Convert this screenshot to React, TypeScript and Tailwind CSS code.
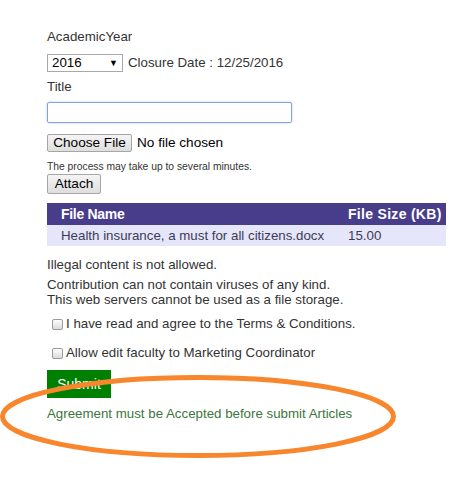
import React from "react";

const GreyButton = ({ label, className }: { label: string; className: string }) => (
   <span
      className={
         "flex items-center justify-center rounded-[2px] border border-[#a6a6a6] bg-gradient-to-b from-[#f4f4f4] to-[#dedede] text-[13.6px] text-black " +
         className
      }
   >
      {label}
   </span>
);

const Checkbox = () => (
   <span className="h-[11px] w-[11px] shrink-0 rounded-[2px] border border-[#9a9a9a] bg-gradient-to-b from-[#fdfdfd] to-[#dcdcdc]" />
);

const App = () => {
   return (
      <div className="relative h-[487px] w-[476px] overflow-hidden bg-white font-['Liberation_Sans',Arial,sans-serif] text-[13.3px] leading-[18px] text-[#333]">
         <div className="flex flex-col pl-[47px] pt-[27px]">
            <p className="leading-[20px]">AcademicYear</p>

            <div className="mt-[7px] flex h-[18px] items-center">
               <span className="flex h-[18px] w-[76px] items-center justify-between border border-[#a9a9a9] pl-[4px] pr-[4px] text-black">
                  <span>2016</span>
                  <span className="text-[9px]">▼</span>
               </span>
               <span className="ml-[5px]">Closure Date : 12/25/2016</span>
            </div>

            <p className="mt-[5px] leading-[20px]">Title</p>
            <span className="mt-[5px] h-[21px] w-[245px] rounded-[2px] border border-[#86a4dc] shadow-[0_0_2px_#a9c1ee]" />

            <div className="mt-[11px] flex h-[18px] items-center">
               <GreyButton label="Choose File" className="h-[18px] w-[85px]" />
               <span className="ml-[5px] text-[13.6px] text-black">No file chosen</span>
            </div>

            <p className="mt-[9px] text-[10.3px] leading-[12px]">The process may take up to several minutes.</p>
            <GreyButton label="Attach" className="mt-[1px] h-[20px] w-[54px]" />

            <div className="mt-[9px] w-[399px]">
               <div className="grid h-[22px] grid-cols-[301px_1fr] items-center bg-[#483d8b] text-[14px] font-bold text-white">
                  <span className="pl-[14px] tracking-[-0.3px]">File Name</span>
                  <span className="tracking-[0.3px]">File Size (KB)</span>
               </div>
               <div className="grid h-[21px] grid-cols-[301px_1fr] items-center bg-[#e6e6fa] text-[#3b3b55]">
                  <span className="pl-[14px]">Health insurance, a must for all citizens.docx</span>
                  <span>15.00</span>
               </div>
            </div>

            <p className="mt-[10px] leading-[18px]">Illegal content is not allowed.</p>
            <p className="mt-[3px] leading-[15px]">
               Contribution can not contain viruses of any kind.
               <br />
               This web servers cannot be used as a file storage.
            </p>

            <label className="mt-[8px] flex h-[18px] items-center gap-[3px] pl-[5px]">
               <Checkbox />
               <span>I have read and agree to the Terms &amp; Conditions.</span>
            </label>
            <label className="mt-[11px] flex h-[18px] items-center gap-[3px] pl-[5px]">
               <Checkbox />
               <span>Allow edit faculty to Marketing Coordinator</span>
            </label>

            <span className="mt-[8px] flex h-[28px] w-[64px] items-center justify-center bg-[#008000] text-[14px] text-white">
               Submit
            </span>

            <p className="mt-[7px] leading-[18px] text-[#3c763d]">
               Agreement must be Accepted before submit Articles
            </p>
         </div>

         {/* annotation drawn over the form */}
         <svg className="absolute left-0 top-0" width="476" height="487" viewBox="0 0 476 487">
            <ellipse cx="198" cy="416.5" rx="195.5" ry="39" fill="none" stroke="#f7862d" strokeWidth="5" />
         </svg>
      </div>
   );
};

export default App;
